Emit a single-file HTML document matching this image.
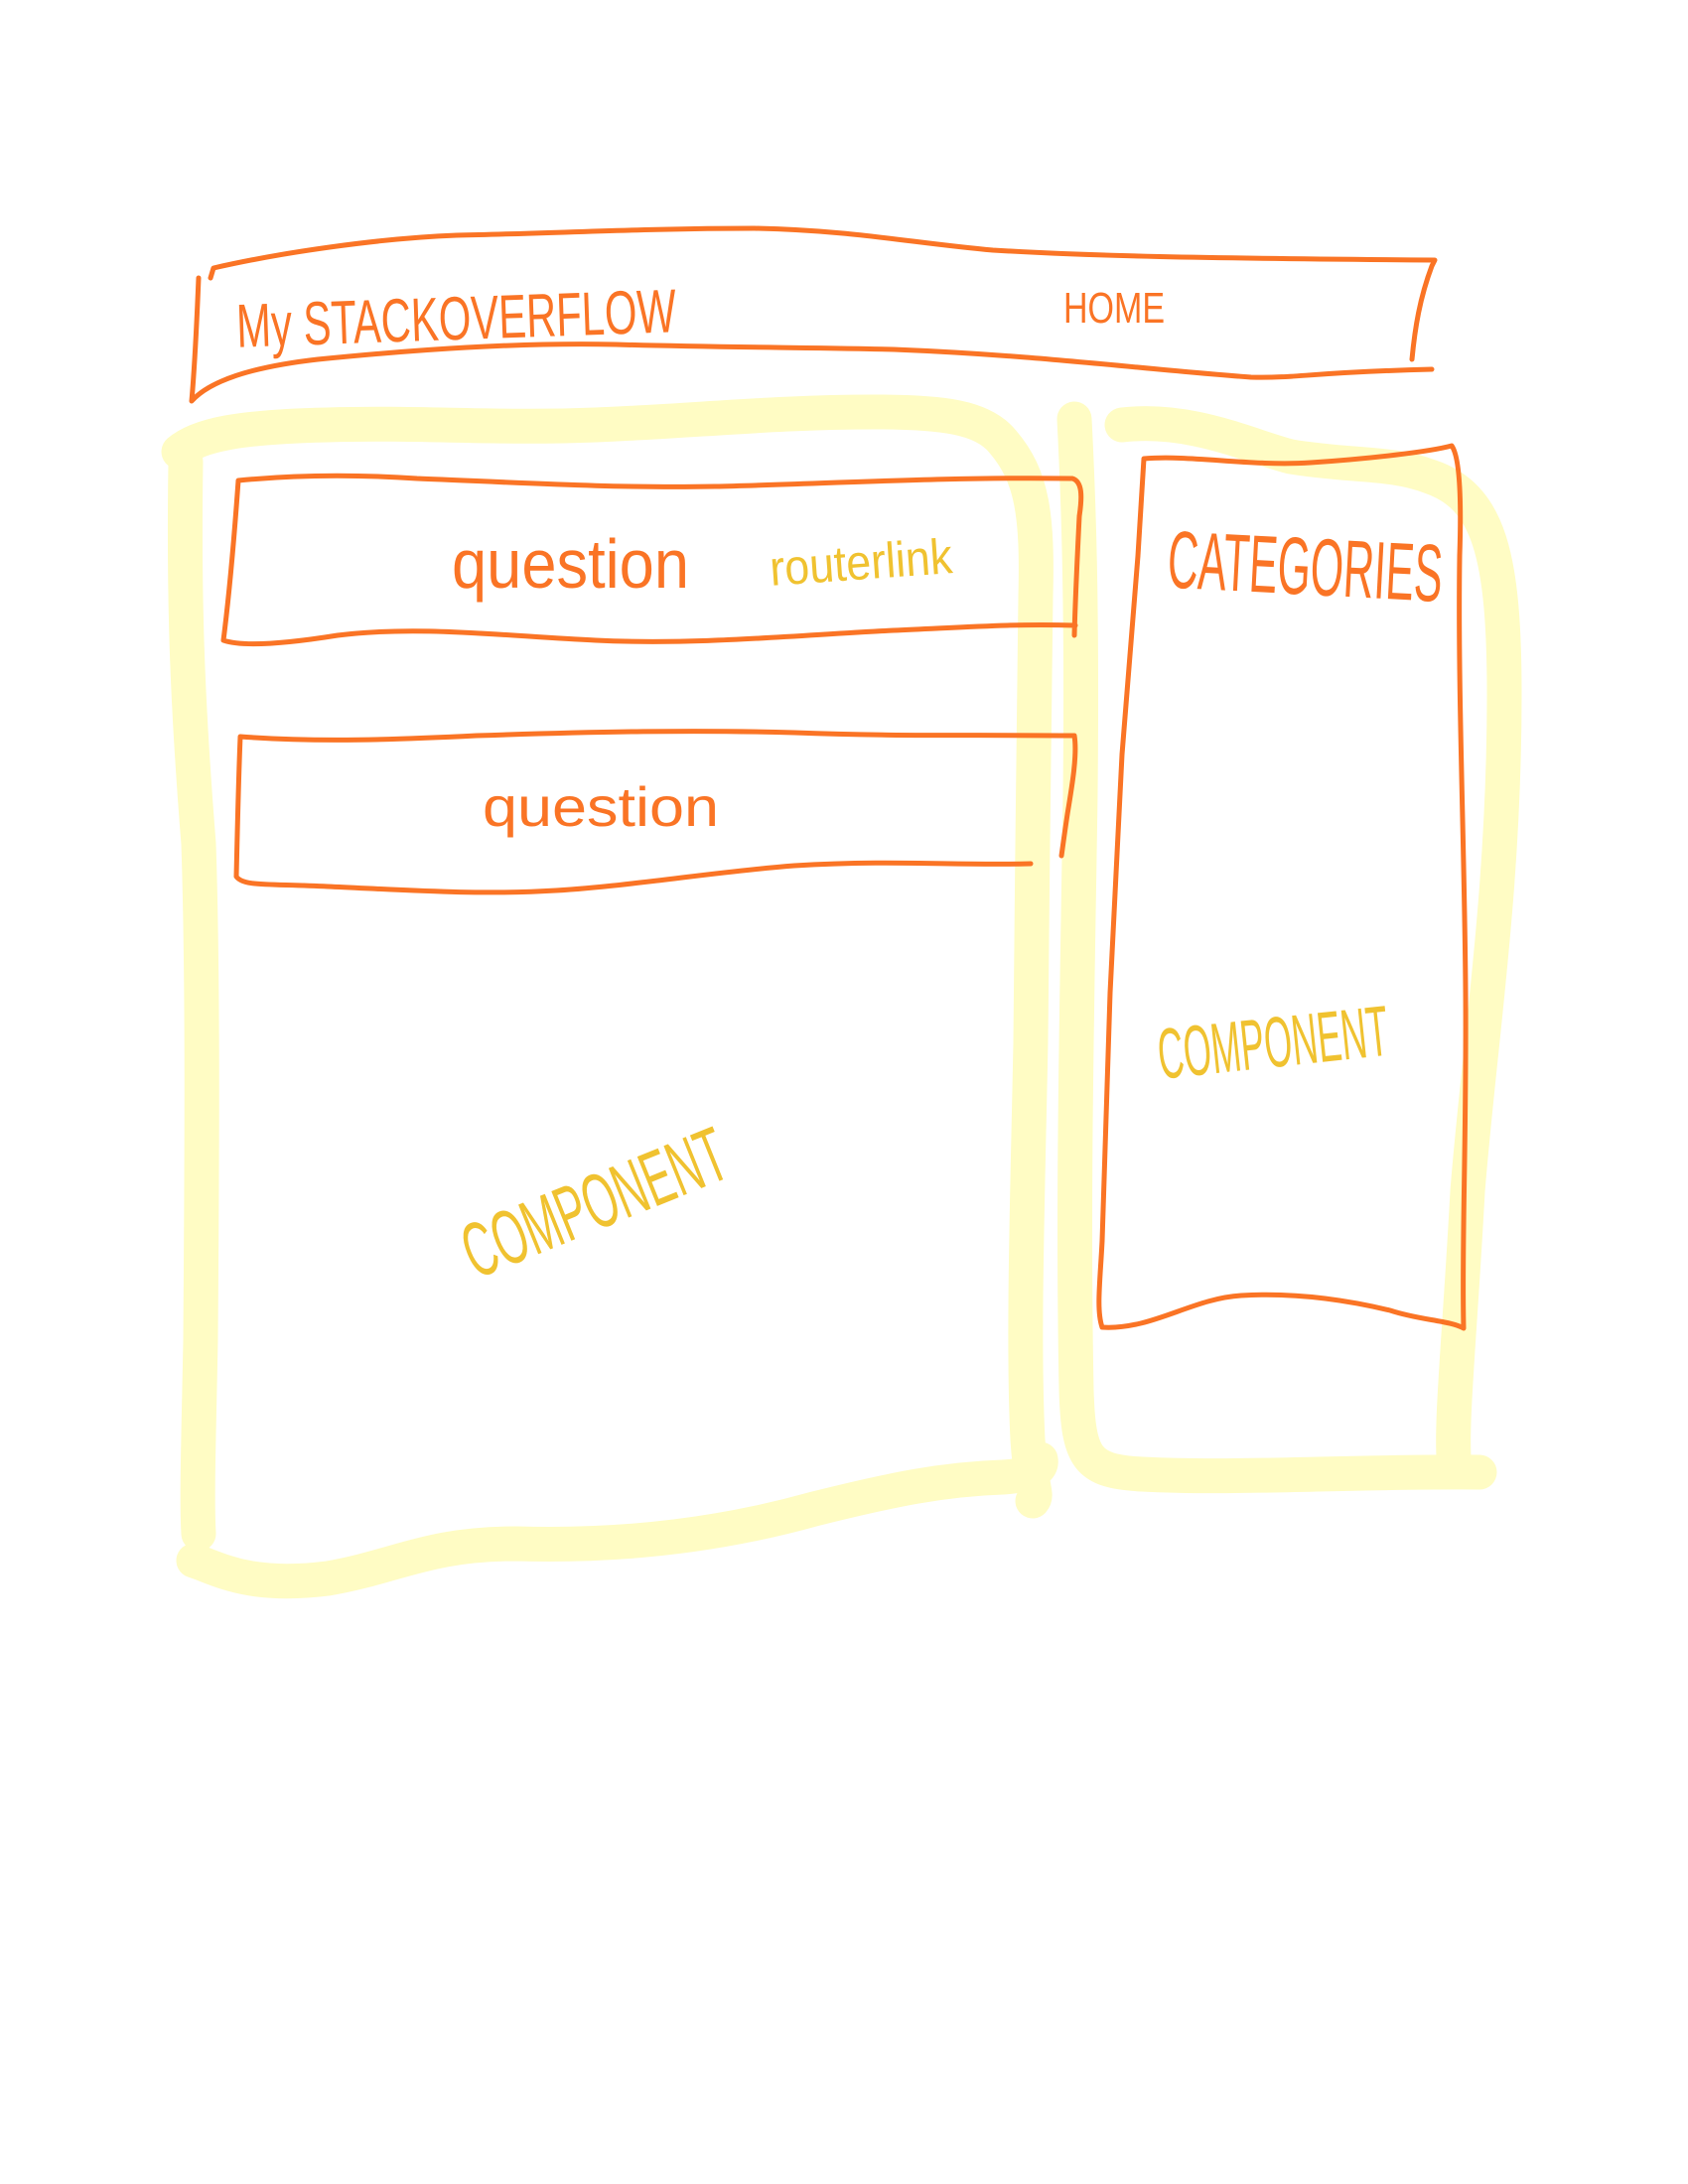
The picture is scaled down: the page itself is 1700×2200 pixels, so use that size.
<!DOCTYPE html>
<html><head><meta charset="utf-8"><style>
html,body{margin:0;padding:0;background:#fff;}
svg{display:block}
text{font-family:"Liberation Sans Narrow","Liberation Sans",sans-serif;}
</style></head><body>
<svg width="1700" height="2200" viewBox="0 0 1700 2200" xmlns="http://www.w3.org/2000/svg">
<g fill="none" stroke="#fffcc4" stroke-width="35" stroke-linecap="round" stroke-linejoin="round">
<path d="M180 455 C200 438 240 430 330 428 C420 425 500 432 600 428 C700 424 780 415 880 415 C950 415 990 420 1010 445 C1040 480 1045 520 1043 600 C1040 750 1040 900 1038 1050 C1035 1200 1030 1350 1035 1450 C1038 1500 1046 1505 1040 1512"/>
<path d="M187 465 C185 600 188 700 200 850 C205 1000 203 1200 202 1350 C200 1450 198 1510 200 1545"/>
<path d="M195 1572 C220 1580 250 1600 330 1590 C400 1578 430 1555 520 1555 C620 1558 720 1548 820 1520 C900 1500 950 1490 1010 1488 C1040 1486 1050 1480 1048 1470"/>
<path d="M1082 422 C1086 500 1090 600 1088 800 C1085 1000 1080 1200 1084 1400 C1086 1470 1095 1482 1150 1485 C1250 1490 1350 1482 1490 1483"/>
<path d="M1130 428 C1200 420 1260 450 1300 460 C1360 470 1400 465 1440 480 C1500 500 1515 560 1515 700 C1515 900 1490 1050 1478 1200 C1470 1350 1460 1440 1465 1480"/>
</g>
<g fill="none" stroke="#fa7425" stroke-width="5" stroke-linecap="round" stroke-linejoin="round">
<path d="M212 280 L215 270 C280 255 380 240 460 237 C560 235 650 230 760 230 C860 232 920 245 1000 252 C1100 258 1200 260 1445 262 L1442 268 C1430 300 1425 330 1422 362"/>
<path d="M200 280 C198 330 196 370 193 404 C210 385 250 370 320 362 C420 352 520 345 620 347 C720 350 820 350 900 352 C1050 358 1150 372 1260 380 C1310 381 1320 375 1442 372"/>
<path d="M240 484 C300 478 360 478 420 482 C520 486 620 492 720 490 C820 488 950 480 1080 482 C1090 485 1090 500 1087 520 C1085 560 1083 600 1082 640 M240 484 C236 540 232 590 225 645 C245 652 290 648 340 640 C420 630 500 640 600 645 C700 650 800 640 900 635 C970 632 1020 628 1083 630"/>
<path d="M242 742 C320 748 400 745 480 741 C600 737 700 735 800 738 C900 742 980 740 1082 741 C1085 760 1080 790 1075 820 C1072 840 1070 855 1069 862 M242 742 C240 790 239 840 238 883 C245 893 270 890 330 893 C400 896 480 902 560 897 C640 892 720 878 800 872 C900 866 960 872 1038 870"/>
<path d="M1152 462 C1200 458 1260 470 1320 466 C1380 462 1440 455 1462 449 C1470 460 1472 500 1470 560 C1468 700 1475 850 1476 1000 C1477 1150 1472 1250 1474 1338 C1460 1330 1430 1330 1400 1320 C1350 1308 1300 1302 1250 1305 C1200 1308 1160 1340 1110 1337 C1104 1320 1108 1290 1110 1250 L1118 1000 L1130 760 L1146 560 L1152 462"/>
</g>
<g fill="#fa7425">
<text x="238" y="342" font-size="62" textLength="443" lengthAdjust="spacingAndGlyphs" transform="rotate(-2 460 320)">My STACKOVERFLOW</text>
<text x="1071" y="325" font-size="44" textLength="102" lengthAdjust="spacingAndGlyphs">HOME</text>
<text x="455" y="592" font-size="70" textLength="239" lengthAdjust="spacingAndGlyphs">question</text>
<text x="486" y="832" font-size="56" textLength="238" lengthAdjust="spacingAndGlyphs">question</text>
<text x="1176" y="598" font-size="82" textLength="277" lengthAdjust="spacingAndGlyphs" transform="rotate(3 1300 570)">CATEGORIES</text>
</g>
<g fill="#f0c230">
<text x="775" y="584" font-size="50" textLength="184" lengthAdjust="spacingAndGlyphs" transform="rotate(-4 860 565)">routerlink</text>
<text x="450" y="1240" font-size="78" textLength="280" lengthAdjust="spacingAndGlyphs" transform="rotate(-22 590 1190)">COMPONENT</text>
<text x="1165" y="1075" font-size="72" textLength="233" lengthAdjust="spacingAndGlyphs" transform="rotate(-6 1280 1045)">COMPONENT</text>
</g>
</svg>
</body></html>
